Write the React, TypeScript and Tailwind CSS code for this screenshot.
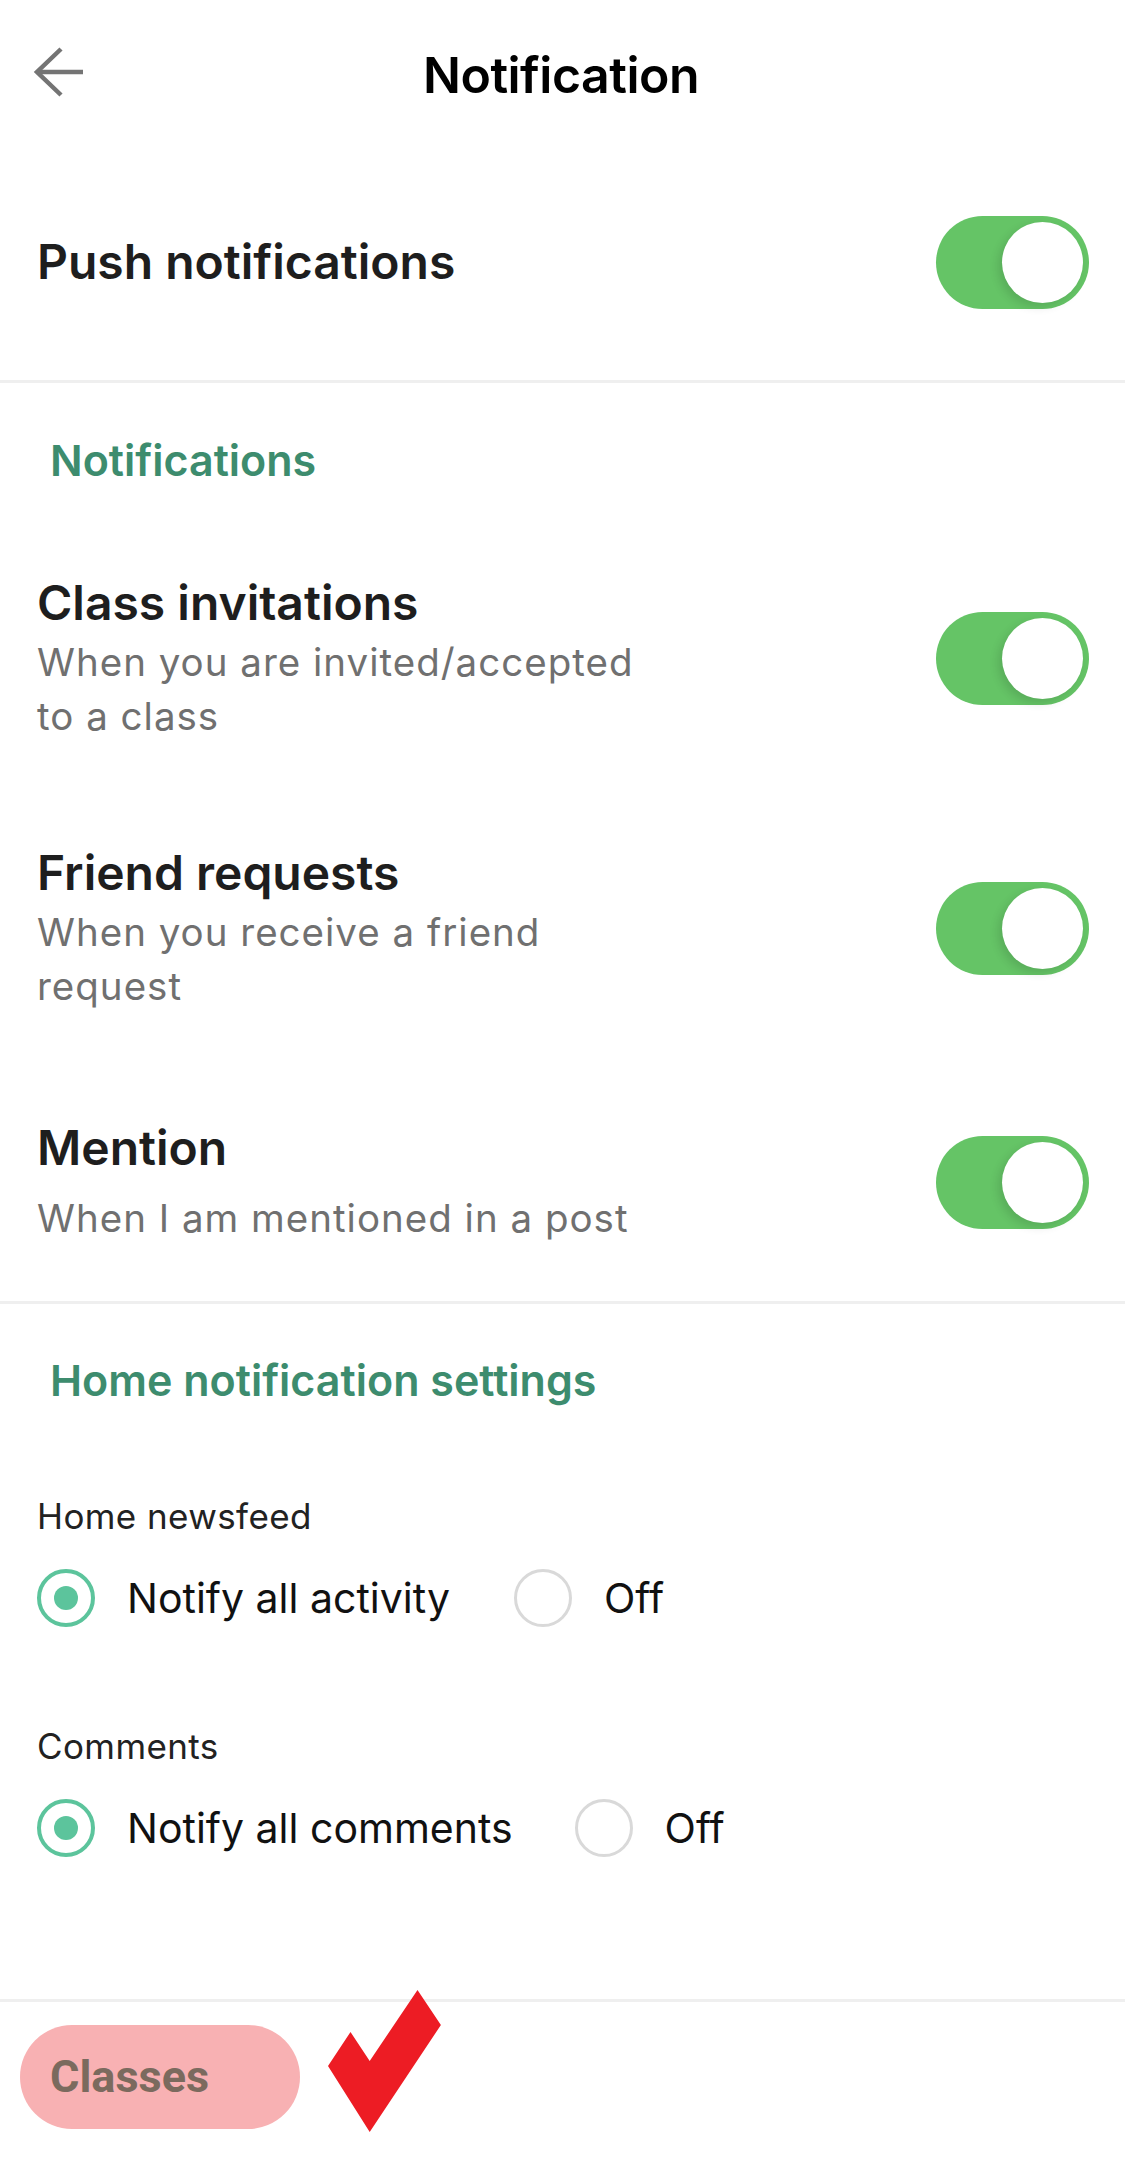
import React from "react";

const font = "font-['Inter','Noto_Sans',sans-serif]";

function Toggle() {
  return (
    <div className="w-[153px] h-[93px] shrink-0 rounded-full bg-[#65c466] p-[6px] flex justify-end">
      <div className="w-[81px] h-[81px] rounded-full bg-white shadow-[-4px_4px_10px_rgba(0,0,0,0.12)]" />
    </div>
  );
}

function Radio({ checked }: { checked: boolean }) {
  if (checked) {
    return (
      <div className="w-[58px] h-[58px] shrink-0 rounded-full border-[4px] border-[#5cc49c] flex items-center justify-center">
        <div className="w-[24px] h-[24px] rounded-full bg-[#5cc49c]" />
      </div>
    );
  }
  return <div className="w-[58px] h-[58px] shrink-0 rounded-full border-[3px] border-[#d9d9d9]" />;
}

type TSettingRowProps = {
  title: string;
  subtitle: string;
  className?: string;
  subClassName?: string;
};

function SettingRow({ title, subtitle, className, subClassName }: TSettingRowProps) {
  return (
    <div className={"flex items-center justify-between pl-[37px] pr-[36px] " + (className ?? "")}>
      <div className="w-[620px]">
        <div className="text-[48px] leading-[56px] font-semibold text-[#1e1e1e]">{title}</div>
        <div className={"text-[38.5px] leading-[54px] tracking-[1px] text-[#707070] " + (subClassName ?? "mt-[3.5px]")}>
          {subtitle}
        </div>
      </div>
      <Toggle />
    </div>
  );
}

function RadioOption({ label, checked }: { label: string; checked: boolean }) {
  return (
    <div className="flex items-center gap-[32px]">
      <Radio checked={checked} />
      <span className="text-[41px] leading-[60px] text-[#111]">{label}</span>
    </div>
  );
}

export default function App() {
  return (
    <div className={"w-[1125px] h-[2170px] bg-white flex flex-col overflow-hidden " + font}>
      {/* Header */}
      <div className="h-[150px] shrink-0 grid grid-cols-[1fr_auto_1fr] items-center pl-[33px] pr-[36px]">
        <svg width="52" height="52" viewBox="0 0 52 52" className="mb-[8px]" fill="none">
          <path d="M28 4 L4 27 L28 50" stroke="#747474" strokeWidth="4.5" />
          <path d="M5 27 H50" stroke="#747474" strokeWidth="4.5" />
        </svg>
        <div className="text-[50px] leading-[60px] font-semibold text-black tracking-[-0.5px]">Notification</div>
        <div />
      </div>

      {/* Push notifications */}
      <div className="h-[230px] shrink-0 flex items-center justify-between pl-[37px] pr-[36px] pb-[6px]">
        <span className="text-[48px] leading-[56px] font-semibold text-[#1e1e1e]">Push notifications</span>
        <Toggle />
      </div>

      <div className="h-[3px] shrink-0 bg-[#efefef]" />

      {/* Notifications */}
      <div className="pt-[52px] pl-[50px] text-[43px] leading-[50px] font-semibold text-[#3d8c6e]">Notifications</div>

      <SettingRow
        className="mt-[90px]"
        title="Class invitations"
        subtitle="When you are invited/accepted to a class"
      />
      <SettingRow
        className="mt-[102.5px]"
        title="Friend requests"
        subtitle="When you receive a friend request"
      />
      <SettingRow
        className="mt-[107.5px]"
        subClassName="mt-[14.5px]"
        title="Mention"
        subtitle="When I am mentioned in a post"
      />

      <div className="h-[3px] shrink-0 bg-[#efefef] mt-[56.5px]" />

      {/* Home notification settings */}
      <div className="pt-[51px] pl-[50px] text-[43px] leading-[50px] font-semibold text-[#3d8c6e]">
        Home notification settings
      </div>

      <div className="mt-[90.5px] pl-[37px] text-[35px] leading-[40px] tracking-[0.4px] text-[#222]">Home newsfeed</div>
      <div className="mt-[32px] pl-[37px] flex items-center gap-[64px]">
        <RadioOption label="Notify all activity" checked />
        <RadioOption label="Off" checked={false} />
      </div>

      <div className="mt-[98px] pl-[37px] text-[35px] leading-[40px] tracking-[0.4px] text-[#222]">Comments</div>
      <div className="mt-[32px] pl-[37px] flex items-center gap-[62px]">
        <RadioOption label="Notify all comments" checked />
        <RadioOption label="Off" checked={false} />
      </div>

      <div className="h-[3px] shrink-0 bg-[#efefef] mt-[141px]" />

      {/* Bottom bar */}
      <div className="relative flex-1 pt-[23px] pl-[20px]">
        <div className="w-[280px] h-[104px] rounded-full bg-[#f8b1b3] flex items-center pl-[30px]">
          <span className="font-['Roboto',sans-serif] font-bold text-[45px] text-[#7b6a5e]">Classes</span>
        </div>
        <svg
          className="absolute left-[326px] top-[-14px]"
          width="118"
          height="146"
          viewBox="0 0 118 146"
        >
          <polygon points="2,78 24.5,44 43.7,73 91.5,2 114.9,37 43.7,144" fill="#ed1c24" />
        </svg>
      </div>
    </div>
  );
}
